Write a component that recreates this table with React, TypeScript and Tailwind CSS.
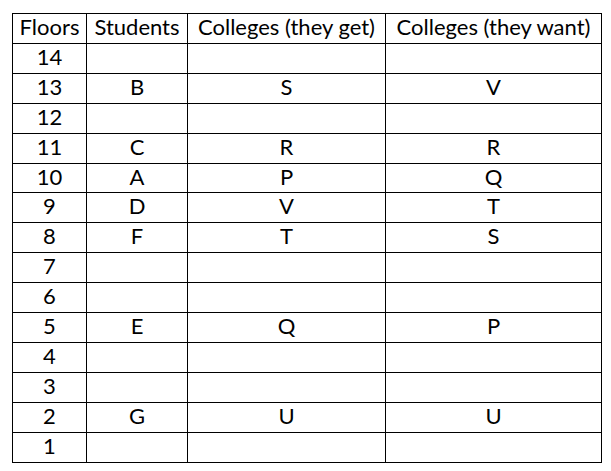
import React from "react";

const rows: [string, string, string, string][] = [
  ["14", "", "", ""],
  ["13", "B", "S", "V"],
  ["12", "", "", ""],
  ["11", "C", "R", "R"],
  ["10", "A", "P", "Q"],
  ["9", "D", "V", "T"],
  ["8", "F", "T", "S"],
  ["7", "", "", ""],
  ["6", "", "", ""],
  ["5", "E", "Q", "P"],
  ["4", "", "", ""],
  ["3", "", "", ""],
  ["2", "G", "U", "U"],
  ["1", "", "", ""],
];

const widths = ["w-[74px]", "w-[101px]", "w-[198px]", "w-[216px]"];

function Row({ cells, h }: { cells: string[]; h: string }) {
  return (
    <div className={`flex ${h}`}>
      {cells.map((c, i) => (
        <div
          key={i}
          className={`${widths[i]} shrink-0 border-r border-b border-black flex items-center justify-center leading-none whitespace-nowrap pb-[2px]`}
        >
          {c}
        </div>
      ))}
    </div>
  );
}

export default function App() {
  return (
    <div
      className="w-[611px] h-[471px] bg-white pt-[10px] pl-[12px] text-black text-[22px]"
      style={{ fontFamily: "Lato, 'Open Sans', sans-serif" }}
    >
      <div className="inline-flex flex-col border-l border-t border-black">
        <Row cells={["Floors", "Students", "Colleges (they get)", "Colleges (they want)"]} h="h-[30px]" />
        {rows.map((r, i) => (
          <Row key={i} cells={r} h={i === 4 ? "h-[29px]" : "h-[30px]"} />
        ))}
      </div>
    </div>
  );
}
